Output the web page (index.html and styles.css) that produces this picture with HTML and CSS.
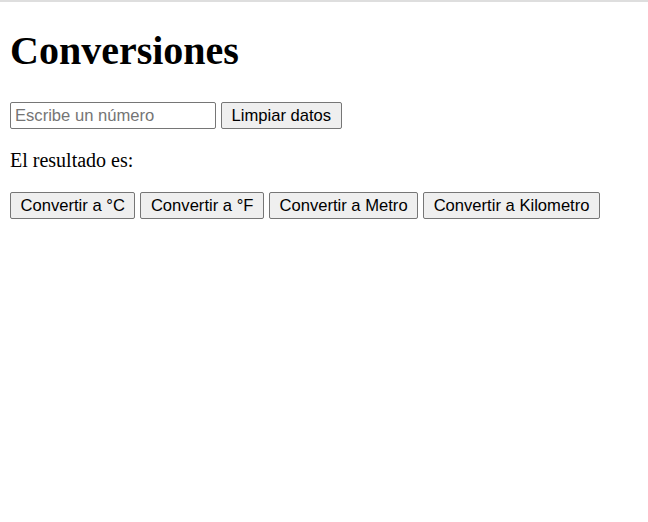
FILE: index.html
```html
<!DOCTYPE html>
<html lang="es">
<head>
<meta charset="utf-8">
<title>Conversiones</title>
<link rel="stylesheet" href="styles.css">
</head>
<body>
<div class="page">
  <h1 class="title">Conversiones</h1>
  <div class="row">
    <input class="field" type="text" placeholder="Escribe un número">
    <button class="btn">Limpiar datos</button>
  </div>
  <p class="result">El resultado es:</p>
  <div class="row">
    <button class="btn">Convertir a °C</button>
    <button class="btn">Convertir a °F</button>
    <button class="btn">Convertir a Metro</button>
    <button class="btn">Convertir a Kilometro</button>
  </div>
</div>
</body>
</html>
```
FILE: styles.css
```css
html, body {
  margin: 0;
  padding: 0;
  background: #fff;
}
body {
  border-top: 2px solid #dedede;
  font-family: "Liberation Serif", "Times New Roman", serif;
  color: #000;
}
.page {
  padding: 0 10px;
}
.title {
  font-size: 40px;
  font-weight: bold;
  margin: 26px 0 28px;
  line-height: 46px;
}
.row {
  display: flex;
  gap: 5px;
  align-items: stretch;
}
.field {
  width: 206px;
  height: 27px;
  box-sizing: border-box;
  border: 1px solid #767676;
  border-radius: 2px;
  padding: 1px 4px;
  font: 16.6px "Liberation Sans", Arial, sans-serif;
  margin: 0;
}
.field::placeholder {
  color: #757575;
}
.btn {
  height: 27px;
  box-sizing: border-box;
  padding: 1px 9.5px;
  border: 1px solid #767676;
  border-radius: 2px;
  background: #efefef;
  font: 16.6px "Liberation Sans", Arial, sans-serif;
  color: #000;
  margin: 0;
}
.result {
  font-size: 20px;
  margin: 20px 0 20px;
  line-height: 23px;
}
```
